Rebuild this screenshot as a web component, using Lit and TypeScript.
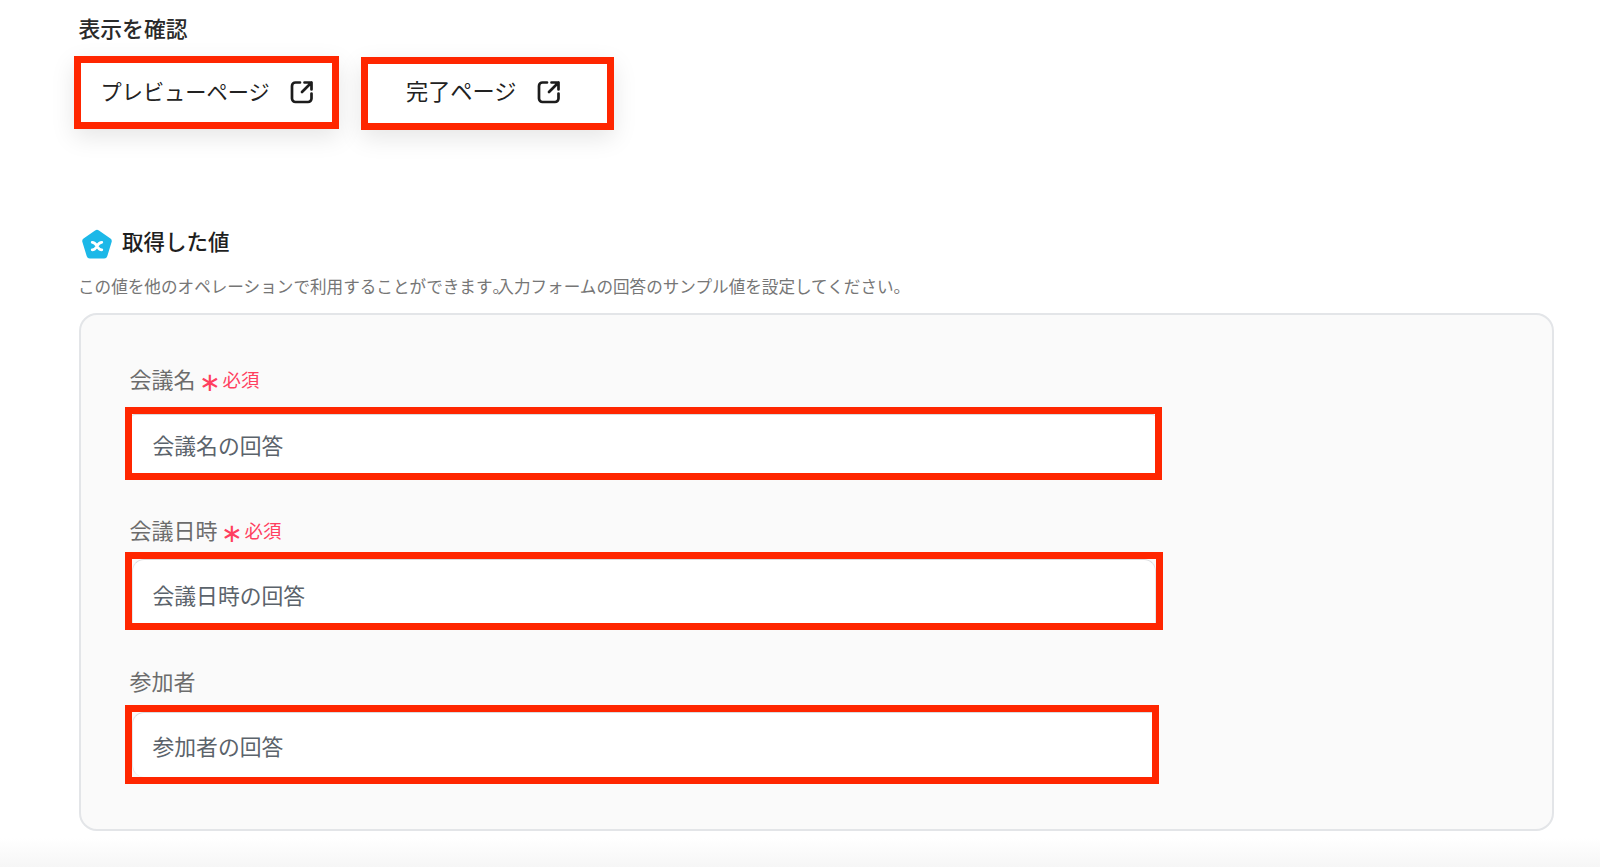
import { LitElement, html, css } from "lit";
import { customElement } from "lit/decorators.js";

const openIcon = html`<svg class="ext" viewBox="0 0 24 24" fill="none" stroke="#1c1c1c" stroke-width="2.7" stroke-linecap="round" stroke-linejoin="round">
  <path d="M10 2.5H5.5a3.5 3.5 0 0 0-3.5 3.5v12.5a3.5 3.5 0 0 0 3.5 3.5h12.5a3.5 3.5 0 0 0 3.5-3.5v-5"/>
  <path d="M12 12L21.5 2.5M14.5 2.5h7v7"/>
</svg>`;

const required = html`<span class="star">∗</span><span class="req">必須</span>`;

@customElement("app-root")
export class AppRoot extends LitElement {
  static styles = css`
    :host {
      display: block;
      height: 867px;
      overflow: hidden;
      box-sizing: border-box;
      padding: 12px 46px 0 78.5px;
      font-family: "Noto Sans CJK JP", "Noto Sans", sans-serif;
      color: #222;
      background: linear-gradient(to bottom, #fff 0, #fff 838px, #f6f6f6 867px);
    }
    .title {
      font-size: 21.8px;
      line-height: 31px;
      font-weight: 500;
      color: #2a2a2a;
    }
    .buttons {
      display: flex;
      align-items: flex-start;
      gap: 22px;
      margin: 13px 0 0 -5px;
    }
    .btn {
      box-sizing: border-box;
      display: flex;
      align-items: center;
      height: 73px;
      border: 7px solid #ff2600;
      background: #fff;
      color: #222;
      box-shadow: 0 8px 24px rgba(0, 0, 0, 0.1);
    }
    .btn.preview {
      width: 265.5px;
      padding: 0 0 2px 20px;
      font-size: 21.2px;
    }
    .preview .t {
      margin-bottom: 2px;
    }
    .btn.done {
      width: 253px;
      margin-top: 1px;
      padding: 0 0 4px 38px;
      font-size: 22.2px;
    }
    .done .t {
      margin-bottom: 4px;
    }
    .ext {
      width: 24px;
      height: 24px;
      flex: none;
      margin-left: 20px;
    }
    .head {
      display: flex;
      align-items: center;
      gap: 9px;
      margin: 99px 0 0 2.5px;
      height: 32px;
      font-size: 21.5px;
      font-weight: 500;
      color: #1f1f1f;
    }
    .head span {
      margin-top: -10px;
    }
    .logo {
      width: 32px;
      height: 32px;
      flex: none;
    }
    .desc {
      margin: 13px 0 0 -0.5px;
      font-size: 16.6px;
      line-height: 24px;
      color: #767676;
      white-space: nowrap;
    }
    .stop {
      letter-spacing: -11.8px;
    }
    .panel {
      box-sizing: border-box;
      height: 517.5px;
      margin-top: 15px;
      padding: 47px 0 0 49px;
      background: #fafafa;
      border: 2px solid #e3e5e8;
      border-radius: 18px;
    }
    .label {
      display: flex;
      align-items: center;
      height: 32px;
      font-size: 22px;
      color: #6c6c6c;
    }
    .star {
      margin-left: 3px;
      font-size: 26px;
      line-height: 32px;
      color: #ff3f5f;
      margin-top: 3px;
    }
    .req {
      margin-left: 2px;
      font-size: 18.4px;
      color: #ff3f5f;
      margin-top: 1px;
    }
    .box {
      box-sizing: border-box;
      margin: 13px 0 0 -5px;
      border: 7px solid #ff2600;
      background: #fafafa;
    }
    .box.a {
      width: 1037px;
      height: 73px;
      margin-bottom: 33px;
    }
    .box.b {
      width: 1038px;
      height: 78px;
      margin-top: 7px;
      margin-bottom: 34px;
    }
    .box.c {
      width: 1034px;
      height: 79px;
      margin-top: 9px;
    }
    .input {
      box-sizing: border-box;
      display: flex;
      align-items: center;
      height: 100%;
      padding-left: 21px;
      font-size: 21.8px;
      color: #5b636b;
      background: #fff;
      border-top: 1px solid #d9dbde;
    }
    .a .input {
      border-radius: 3px 3px 0 3px;
    }
    .b .input {
      border-left: 1px solid #e6e8ea;
      border-right: 1px solid #e6e8ea;
      border-radius: 12px 12px 0 0;
      padding: 6px 0 0 20px;
    }
    .c .input {
      border-left: 1px solid #e6e8ea;
      border-radius: 12px 0 0 12px;
      padding-left: 20px;
    }
  `;

  render() {
    return html`
      <div class="title">表示を確認</div>
      <div class="buttons">
        <div class="btn preview"><span class="t">プレビューページ</span>${openIcon}</div>
        <div class="btn done"><span class="t">完了ページ</span>${openIcon}</div>
      </div>
      <div class="head">
        <svg class="logo" viewBox="0 0 30 30">
          <path d="M13.2 1.3a3 3 0 0 1 3.6 0L27.6 9a3 3 0 0 1 1.1 3.3L24.6 25.6a3 3 0 0 1-2.9 2.1H8.3a3 3 0 0 1-2.9-2.1L1.3 12.3A3 3 0 0 1 2.4 9z" fill="#1cb8e8"/>
          <path d="M10.5 12.5c2.6 0 3.4 1.7 4.5 3.6s1.9 3.4 4.5 3.4M19.5 12.5c-2.6 0-3.4 1.7-4.5 3.6s-1.9 3.4-4.5 3.4" fill="none" stroke="#fff" stroke-width="2.6" stroke-linecap="round"/>
        </svg>
        <span>取得した値</span>
      </div>
      <div class="desc">この値を他のオペレーションで利用することができます<span class="stop">。</span>入力フォームの回答のサンプル値を設定してください。</div>
      <div class="panel">
        <div class="label">会議名${required}</div>
        <div class="box a"><div class="input">会議名の回答</div></div>
        <div class="label">会議日時${required}</div>
        <div class="box b"><div class="input">会議日時の回答</div></div>
        <div class="label">参加者</div>
        <div class="box c"><div class="input">参加者の回答</div></div>
      </div>
    `;
  }
}
